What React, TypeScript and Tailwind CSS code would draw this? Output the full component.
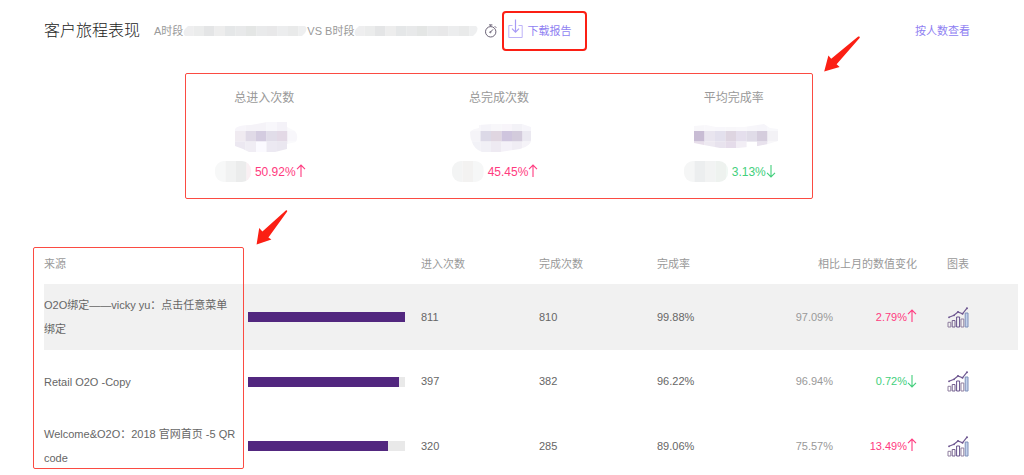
import clsx from "clsx";

// MASKED FIGURES: one colour per cell, "" leaves the cell empty
const stats = [
  {
    label: "总进入次数",
    value: "50.92%",
    up: true,
    shape: "M0 7 Q2 3 16 3 L32 0 H52 V5 L60 9 Q64 14 61 20 L52 22 V27 L40 30 H14 L8 27 L0 24Z",
    cells: [
      ["#f7f5fa", "#f5f3f8", "#f5f3f8", "#f8f7fb", "#f4f2f8", "#fafafc"],
      ["#f0ebf1", "#e0dae7", "#d4cce0", "#e1dde9", "#e3d9e6", "#f8f7fb"],
      ["#ece8f1", "#f0edf4", "#fbfaff", "#ece9f2", "#eae7f0", "#fafafc"],
    ],
    tagWidth: 36,
    tag: ["#f7f8f8", "#f1f2f2", "#ebecec", "#faf0f3"],
  },
  {
    label: "总完成次数",
    value: "45.45%",
    up: true,
    shape: "M0 10 Q2 7 9 6 V3 L22 2 L52 2 L61 5 V18 Q61 24 50 27 L30 30 H12 Q4 27 2 20 Q0 16 0 10Z",
    cells: [
      ["#f8f7fa", "#f5f4f9", "#f8f7fa", "#f8f5fa", "#f3f2f7", "#f6f5fa"],
      ["#f5f4f8", "#dcd9e7", "#e0d6e1", "#cfc5de", "#d3cbdc", "#ebe9f1"],
      ["#f2f2f7", "#f1f0f6", "#eeeaf2", "#f4f1f8", "#f0edf4", "#f5f3f8"],
    ],
    tagWidth: 32,
    tag: ["#f3f4f4", "#f3f2f1", "#f6f7f7"],
  },
  {
    label: "平均完成率",
    value: "3.13%",
    up: false,
    shape: "M0 4 L12 3 L22 5 L50 5 L70 2 L76 6 L84 7 V19 L74 22 L64 24 L44 26 L26 26 L10 23 L0 21Z",
    cells: [
      ["#f8f7fa", "#f9f8fb", "#f8f7fb", "#f8f7fa", "#f9f8fb", "#f7f6fa", "#f6f5fa", "#f8f8fb"],
      ["#c8bcd4", "#e9e5ef", "#e3e0ed", "#ded5e1", "#e5dfed", "#e0dce8", "#d5cddd", "#f3f2f6"],
      ["#e8dfeb", "#ede9f1", "#e8e3ee", "#e5dcea", "#f2eef5", "", "#e8e2ed", "#f8f7fa"],
    ],
    tagWidth: 44,
    tag: ["#f5f6f6", "#eceeef", "#f2f3f3", "#eef2ef", "#f1f8f4"],
  },
];

// TABLE ROWS
const rows = [
  { name: "O2O绑定——vicky yu：点击任意菜单绑定", entered: 811, done: 810, rate: "99.88%", prev: "97.09%", change: "2.79%", up: true },
  { name: "Retail O2O -Copy", entered: 397, done: 382, rate: "96.22%", prev: "96.94%", change: "0.72%", up: false },
  { name: "Welcome&O2O：2018 官网首页 -5 QR code", entered: 320, done: 285, rate: "89.06%", prev: "75.57%", change: "13.49%", up: true },
];

const periodCells = ["#eeeeef", "#ebecec", "#e4e5e6", "#ededed", "#e5e7e8", "#e8e9ea", "#e4e6e5", "#e9eaeb", "#e8e8e9", "#ecedee", "#e9eaea", "#eeeff0"];

const PeriodMask = ({ id }: { id: string }) => (
  <svg className="h-3 w-[124px] shrink-0" viewBox="0 0 124 12" aria-hidden="true">
    <clipPath id={id}>
      <path d="M5 1H122Q125 3 122 8L119 11H2Q-1 8 2 4Z" />
    </clipPath>
    <g clipPath={`url(#${id})`}>
      {periodCells.map((c, i) => (
        <rect key={i} x={i * 10.5} width="10.6" height="12" fill={c} />
      ))}
    </g>
  </svg>
);

const ValueMask = ({ id, shape, cells }: { id: string; shape: string; cells: string[][] }) => {
  const width = cells[0].length * 10.5;
  return (
    <svg width={width} height="31" viewBox={`0 0 ${width} 31`} aria-hidden="true">
      <clipPath id={id}>
        <path d={shape} />
      </clipPath>
      <g clipPath={`url(#${id})`}>
        {cells.map((line, y) =>
          line.map((c, x) => c && <rect key={`${x}-${y}`} x={x * 10.5} y={y === 0 ? 0 : y * 10.5 - 1.5} width="10.6" height={y === 0 ? 9.1 : 10.6} fill={c} />)
        )}
      </g>
    </svg>
  );
};

const TagMask = ({ id, width, colors }: { id: string; width: number; colors: string[] }) => (
  <svg width={width} height="21" viewBox={`0 0 ${width} 21`} aria-hidden="true">
    <clipPath id={id}>
      <rect width={width} height="21" rx="9" />
    </clipPath>
    <g clipPath={`url(#${id})`}>
      {colors.map((c, i) => (
        <rect key={i} x={i * 10.5} width="10.6" height="21" fill={c} />
      ))}
    </g>
  </svg>
);

const TrendArrow = ({ up }: { up: boolean }) => (
  <svg className={clsx("mb-0.5 h-3.5 w-2.5", !up && "rotate-180")} viewBox="0 0 10 14" fill="none" stroke="currentColor" strokeWidth="1.1" aria-hidden="true">
    <path d="M5 13V1M1 5.2L5 1L9 5.2" />
  </svg>
);

const Change = ({ value, up }: { value: string; up: boolean }) => (
  <span className={clsx("inline-flex items-center", up ? "text-[#ff3b80]" : "text-[#43cf7c]")}>
    {value}
    <TrendArrow up={up} />
  </span>
);

const StopwatchIcon = () => (
  <svg className="h-3.5 w-3.5 shrink-0" viewBox="0 0 14 14" fill="none" stroke="#6b6377" aria-hidden="true">
    <circle cx="6.7" cy="7.8" r="5.2" />
    <path d="M5 .9H8.4M6.7 .9V2.6M10.7 2.2L12.3 3.8M6.4 8.2L9 5.4" />
    <circle cx="6.3" cy="8.2" r=".6" />
  </svg>
);

const DownloadIcon = () => (
  <svg className="mb-1 h-5 w-[15px]" viewBox="0 0 15 20" fill="none" stroke="#a79af5" aria-hidden="true">
    <path d="M4.5 6.5H.8V18.5H14.2V6.5H10.5" stroke="#bdb3f8" />
    <path d="M7.5 .5V13M4 9.7L7.5 13.2L11 9.7" strokeWidth="1.2" />
  </svg>
);

const ChartIcon = () => (
  <svg className="h-[21px] w-[22px]" viewBox="0 0 22 21" fill="none" aria-hidden="true">
    <g stroke="#8f7f9f">
      <path d="M1 20V15.3H3.8V20Z" />
      <path d="M5.2 20V13.5H8V20Z" stroke="#75628f" />
      <path d="M9.6 20V10H12.6V20Z" stroke="#66508a" />
      <path d="M14 20V12H16.8V20Z" />
      <path d="M18.2 20V6H21V20Z" fill="#c3d2ec" stroke="#7f90ba" />
    </g>
    <path d="M2 10.3L7 8.3L11 5L15.5 6.8L20 1.2" stroke="#6f5891" strokeWidth="1.2" />
    <g fill="#6f5891">
      <circle cx="2" cy="10.3" r=".9" />
      <circle cx="7" cy="8.3" r=".9" />
      <circle cx="11" cy="5" r="1" />
      <circle cx="15.5" cy="6.8" r="1" />
      <circle cx="20" cy="1.3" r="1" />
    </g>
  </svg>
);

export default function App() {
  return (
    <main className="h-screen overflow-hidden bg-white font-['Liberation_Sans','Noto_Sans_CJK_SC',sans-serif] text-[11px] text-[#666]">
      {/* HEADER */}
      <header className="flex h-[62px] items-center pr-[54px] pl-11 whitespace-nowrap">
        <h1 className="mr-3.5 text-base font-light text-[#222]">客户旅程表现</h1>
        <div className="flex items-center text-[#999]">
          <span>A时段</span>
          <PeriodMask id="period-a" />
          <span>VS B时段</span>
          <PeriodMask id="period-b" />
        </div>
        <div className="ml-1.5 flex items-center gap-1">
          <StopwatchIcon />
          <button className="flex h-10 items-center gap-1 rounded-sm border-2 border-[#fb1f14] px-1 pr-3.5 text-[#8f7ff2]">
            <DownloadIcon />
            下载报告
          </button>
        </div>
        <a href="#people" className="ml-auto text-[#8f7ff2]">
          按人数查看
        </a>
      </header>

      {/* SUMMARY */}
      <section className="relative mt-[11px] mr-[211px] ml-[185px] flex h-[126px] justify-between rounded-xs border border-[#fb4b42] pt-3 text-xs">
        {stats.map((s, i) => (
          <div key={s.label} className="flex w-1/4 flex-col items-center">
            <h2 className="leading-6 text-[#999]">{s.label}</h2>
            <div className="mt-3 pl-1">
              <ValueMask id={`value-${i}`} shape={s.shape} cells={s.cells} />
            </div>
            <div className="mt-2 flex items-center gap-1 pr-2">
              <TagMask id={`tag-${i}`} width={s.tagWidth} colors={s.tag} />
              <Change value={s.value} up={s.up} />
            </div>
          </div>
        ))}
        <svg className="absolute -top-[38px] left-full ml-3 h-9 w-9" viewBox="0 0 36 36" fill="#fb1f14" aria-hidden="true">
          <path d="M34.2 .6Q36 0 35.8 1.8L12.6 28.2L15.6 31L.2 35.6L4.4 19.6L7.2 22.8Z" />
        </svg>
      </section>

      {/* SOURCES */}
      <section className="relative mt-[46px] mr-1.5 ml-11">
        <table className="w-full table-fixed text-left">
          <colgroup>
            <col className="w-[204px]" />
            <col className="w-[173px]" />
            <col className="w-[118px]" />
            <col className="w-[118px]" />
            <col />
            <col className="w-[58px]" />
            <col className="w-[84px]" />
            <col className="w-[101px]" />
          </colgroup>
          <thead>
            <tr className="h-[39px] text-[#999] *:font-normal">
              <th colSpan={2}>来源</th>
              <th>进入次数</th>
              <th>完成次数</th>
              <th>完成率</th>
              <th colSpan={2} className="text-right">相比上月的数值变化</th>
              <th className="pl-[30px]">图表</th>
            </tr>
          </thead>
          <tbody>
            {rows.map((r) => (
              <tr key={r.name} className="h-[63px] first:bg-[#f1f1f1]">
                <td className="py-[9px] pr-3 leading-6">{r.name}</td>
                <td className="pr-4">
                  <div className="h-2.5 bg-[#e9e9e9]">
                    <div className="h-full bg-[#52277f]" style={{ width: r.rate }} />
                  </div>
                </td>
                <td>{r.entered}</td>
                <td>{r.done}</td>
                <td>{r.rate}</td>
                <td className="text-right text-[#999]">{r.prev}</td>
                <td className="text-right">
                  <Change value={r.change} up={r.up} />
                </td>
                <td className="pl-[30px]">
                  <button aria-label="图表" className="block">
                    <ChartIcon />
                  </button>
                </td>
              </tr>
            ))}
          </tbody>
        </table>
        <div className="pointer-events-none absolute top-0.5 -left-[11px] h-[222px] w-[211px] rounded-xs border border-[#fb4b42]" />
        <svg className="absolute -top-[35px] left-[212px] h-[35px] w-8" viewBox="0 0 32 35" fill="#fb1f14" aria-hidden="true">
          <path d="M29.8 .4Q31.4 0 31.2 1.6L12.4 27.6L15.4 29.4L.6 34.6L3.2 18L6.4 21.6Z" />
        </svg>
      </section>
    </main>
  );
}
